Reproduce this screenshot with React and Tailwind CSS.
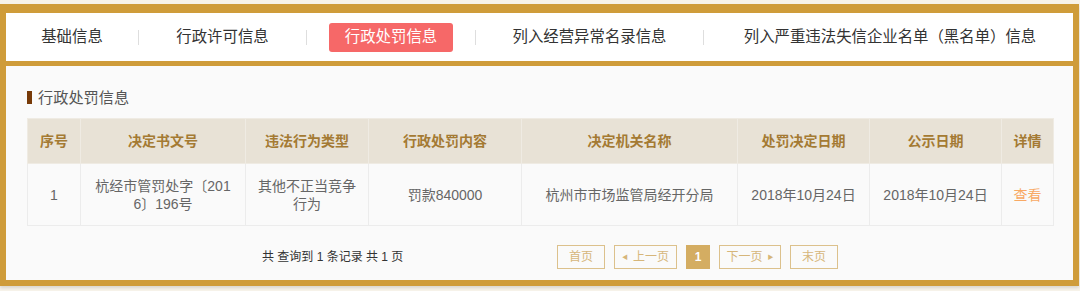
const tabs = [
  { label: "基础信息", w: "w-[132px]" },
  { label: "行政许可信息", w: "w-[167px]" },
  { label: "行政处罚信息", w: "w-[168px]", active: true },
  { label: "列入经营异常名录信息", w: "w-[227px]" },
  { label: "列入严重违法失信企业名单（黑名单）信息", w: "w-[372px]" },
];

const cols = [
  { title: "序号", w: "w-[53px]" },
  { title: "决定书文号", w: "w-[165px]" },
  { title: "违法行为类型", w: "w-[123px]" },
  { title: "行政处罚内容", w: "w-[153px]" },
  { title: "决定机关名称", w: "w-[216px]" },
  { title: "处罚决定日期", w: "w-[132px]" },
  { title: "公示日期", w: "w-[132px]" },
  { title: "详情", w: "w-[52px]" },
];

const Tab = ({ label, w, active }) => (
  <div className={`${w} flex shrink-0 items-center justify-center`}>
    {active ? (
      <span className="flex h-[29px] w-[124px] items-center justify-center rounded-[3px] bg-[#f66868] text-[15.4px] text-white">
        {label}
      </span>
    ) : (
      <span className="text-[15.4px] text-[#333]">{label}</span>
    )}
  </div>
);

const PageBtn = ({ children, className = "" }) => (
  <span
    className={`flex h-[24px] items-center justify-center border border-[#dcc18c] text-[12px] text-[#d6b67a] ${className}`}
  >
    {children}
  </span>
);

export default function App() {
  return (
    <div
      className="h-[291px] w-[1080px] overflow-hidden bg-[#f7f3ea] pt-[4px]"
      style={{ fontFamily: '"Liberation Sans", "Noto Sans CJK SC", sans-serif' }}
    >
      <div className="w-[1079px] border-x-[6px] border-t-[9px] border-b-[6px] border-[#cf9c3a] shadow-[0_2px_3px_rgba(0,0,0,0.12)]">
        {/* tab bar */}
        <div className="flex h-[48px] items-center bg-white leading-none">
          {tabs.map((t, i) => (
            <div key={t.label} className="flex items-center">
              {i > 0 && <span className="h-[15px] w-px bg-[#dedede]" />}
              <Tab {...t} />
            </div>
          ))}
        </div>
        <div className="h-[5px] bg-[#cf9c3a]" />

        {/* content */}
        <div className="h-[214px] bg-[#fafafa] pl-[21px] pr-[19px] pt-[24px]">
          <div className="flex items-center gap-[6px] leading-none">
            <span className="h-[13px] w-[5px] bg-[#773a08]" />
            <span className="text-[15.2px] text-[#555]">行政处罚信息</span>
          </div>

          <table className="mt-[13px] w-[1027px] table-fixed border-collapse text-center text-[14px]">
            <colgroup>
              {cols.map((c) => (
                <col key={c.title} className={c.w} />
              ))}
            </colgroup>
            <thead>
              <tr className="h-[45px] bg-[#e8e2d6]">
                {cols.map((c) => (
                  <th key={c.title} className="border border-[#efebe3] font-bold text-[#a47a33]">
                    {c.title}
                  </th>
                ))}
              </tr>
            </thead>
            <tbody className="text-[#666] leading-[18px]">
              <tr className="h-[62px] bg-[#fafafa]">
                <td className="border border-[#ececec]">1</td>
                <td className="border border-[#ececec]">
                  杭经市管罚处字〔201
                  <br />
                  6〕196号
                </td>
                <td className="border border-[#ececec]">
                  其他不正当竞争
                  <br />
                  行为
                </td>
                <td className="border border-[#ececec]">罚款840000</td>
                <td className="border border-[#ececec]">杭州市市场监管局经开分局</td>
                <td className="border border-[#ececec]">2018年10月24日</td>
                <td className="border border-[#ececec]">2018年10月24日</td>
                <td className="border border-[#ececec] text-[#f8a964]">查看</td>
              </tr>
            </tbody>
          </table>

          {/* footer / pagination */}
          <div className="mt-[19px] flex items-center leading-none">
            <span className="ml-[235px] w-[295px] text-[12px] text-[#333]">共 查询到 1 条记录 共 1 页</span>
            <div className="flex items-center gap-[9px]">
              <PageBtn className="w-[48px]">首页</PageBtn>
              <PageBtn className="w-[63px] gap-[5px]">
                <span className="text-[6px]">◀</span>上一页
              </PageBtn>
              <span className="flex h-[24px] w-[24px] items-center justify-center bg-[#d4ad62] text-[12px] font-bold text-white">
                1
              </span>
              <PageBtn className="w-[62px] gap-[5px]">
                下一页<span className="text-[6px]">▶</span>
              </PageBtn>
              <PageBtn className="w-[48px]">末页</PageBtn>
            </div>
          </div>
        </div>
      </div>
    </div>
  );
}
